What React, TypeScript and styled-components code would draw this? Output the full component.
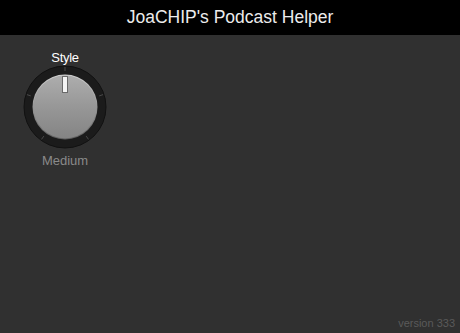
import React from "react";
import styled, { createGlobalStyle } from "styled-components";

const Global = createGlobalStyle`
  html, body { margin: 0; padding: 0; background: #303030; }
  body { font-family: "Liberation Sans", Arial, sans-serif; }
`;

const Page = styled.div`
  width: 460px;
  height: 333px;
  display: flex;
  flex-direction: column;
  background: #303030;
  overflow: hidden;
`;

const Header = styled.header`
  height: 35px;
  flex: none;
  background: #000;
  color: #ececec;
  font-size: 17.5px;
  display: flex;
  align-items: center;
  justify-content: center;
`;

const Main = styled.main`
  flex: 1;
  display: flex;
  flex-direction: column;
  padding: 15px 0 4px 23px;
`;

const Controls = styled.div`
  flex: 1;
  display: flex;
  align-items: flex-start;
`;

const KnobBlock = styled.div`
  width: 84px;
  display: flex;
  flex-direction: column;
  align-items: center;
`;

const Label = styled.div`
  color: #fff;
  font-size: 13px;
  line-height: 15px;
  letter-spacing: -0.3px;
`;

const Value = styled.div`
  color: #8a8a8a;
  font-size: 13px;
  line-height: 15px;
  margin-top: 4px;
`;

const Footer = styled.div`
  color: #5a5a5a;
  font-size: 11px;
  text-align: right;
  padding-right: 5px;
`;

const Knob: React.FC = () => {
  const cx = 42, cy = 42;
  const ticks = [0, 72, 144, 216, 288];
  return (
    <svg width="84" height="84" viewBox="0 0 84 84">
      <defs>
        <linearGradient id="kg" x1="0" y1="0" x2="0" y2="1">
          <stop offset="0" stopColor="#adadad" />
          <stop offset="0.5" stopColor="#979797" />
          <stop offset="1" stopColor="#848484" />
        </linearGradient>
        <linearGradient id="ke" x1="0" y1="0" x2="0" y2="1">
          <stop offset="0" stopColor="#cfcfcf" />
          <stop offset="1" stopColor="#5e5e5e" />
        </linearGradient>
      </defs>
      <circle cx={cx} cy={cy} r="41" fill="#1b1b1b" stroke="#111" strokeWidth="1" />
      {ticks.map((a) => {
        const r = (a * Math.PI) / 180;
        const x1 = cx + Math.sin(r) * 36, y1 = cy - Math.cos(r) * 36;
        const x2 = cx + Math.sin(r) * 40, y2 = cy - Math.cos(r) * 40;
        return <line key={a} x1={x1} y1={y1} x2={x2} y2={y2} stroke="#4a4a4a" strokeWidth="1" />;
      })}
      <circle cx={cx} cy={cy} r="32.5" fill="url(#ke)" />
      <circle cx={cx} cy={cy} r="31.5" fill="url(#kg)" />
      <rect x="39.5" y="11.5" width="5" height="16" fill="#f4f4f4" stroke="#6a6a6a" strokeWidth="1" />
    </svg>
  );
};

export default function App() {
  return (
    <>
      <Global />
      <Page>
        <Header>JoaCHIP's Podcast Helper</Header>
        <Main>
          <Controls>
            <KnobBlock>
              <Label>Style</Label>
              <Knob />
              <Value>Medium</Value>
            </KnobBlock>
          </Controls>
          <Footer>version 333</Footer>
        </Main>
      </Page>
    </>
  );
}
